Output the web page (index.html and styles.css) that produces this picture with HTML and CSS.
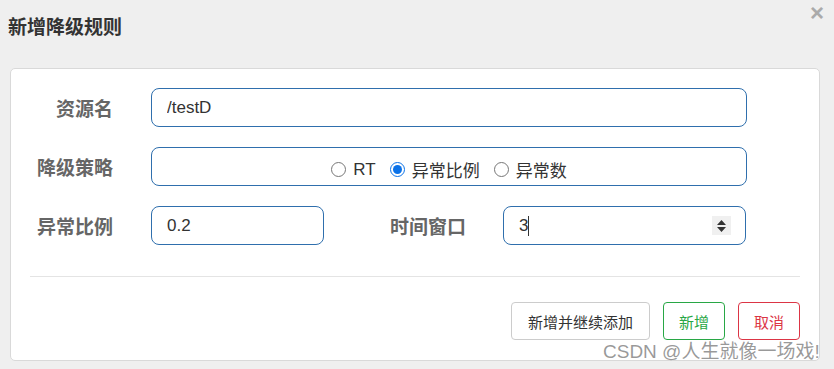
FILE: index.html
```html
<!DOCTYPE html>
<html lang="zh-CN">

<head>
    <meta charset="UTF-8">
    <meta name="viewport" content="width=device-width, initial-scale=1.0">
    <title>新增降级规则</title>
    <link rel="stylesheet" href="styles.css">
</head>

<body>
    <div class="dialog">
        <div class="dialog-head">
            <h3 class="dialog-title">新增降级规则</h3>
            <span class="close">&times;</span>
        </div>
        <div class="panel">
            <form class="form">
                <div class="row">
                    <label class="label">资源名</label>
                    <input class="field field-wide" type="text" value="/testD">
                </div>
                <div class="row">
                    <label class="label">降级策略</label>
                    <div class="field field-wide radios">
                        <label class="radio"><input type="radio" name="grade"> RT</label>
                        <label class="radio"><input type="radio" name="grade" checked> 异常比例</label>
                        <label class="radio"><input type="radio" name="grade"> 异常数</label>
                    </div>
                </div>
                <div class="row">
                    <label class="label">异常比例</label>
                    <input class="field field-short" type="text" value="0.2">
                    <label class="label label-mid">时间窗口</label>
                    <div class="field field-num">
                        <span class="num-val">3</span><span class="caret"></span>
                        <span class="spin">
                            <svg width="11" height="14" viewBox="0 0 11 14"><path d="M5.5 1 L10 6 H1 Z M1 8 H10 L5.5 13 Z" fill="#333"/></svg>
                        </span>
                    </div>
                </div>
            </form>
            <div class="divider"></div>
            <div class="footer">
                <button class="btn">新增并继续添加</button>
                <button class="btn btn-ok">新增</button>
                <button class="btn btn-cancel">取消</button>
            </div>
        </div>
        <div class="mark">CSDN @人生就像一场戏!</div>
    </div>
</body>

</html>
```

FILE: styles.css
```css
* {
    margin: 0;
    padding: 0;
    box-sizing: border-box;
}

body {
    width: 834px;
    height: 369px;
    background-color: #efefef;
    font-family: "Liberation Sans", Arial, "Noto Sans CJK SC", sans-serif;
    color: #333;
    overflow: hidden;
}

.dialog {
    position: relative;
    height: 369px;
}

.dialog-head {
    height: 68px;
    padding: 17px 0 0 8px;
}

.dialog-title {
    font-size: 19px;
    font-weight: bold;
    color: #333;
    line-height: 22px;
}

.close {
    position: absolute;
    right: 10px;
    top: 1px;
    font-size: 24px;
    font-weight: bold;
    color: #aaa;
    line-height: 24px;
}

.panel {
    margin: 0 14px 0 10px;
    height: 293px;
    background-color: #fff;
    border: 1px solid #d9d9d9;
    border-radius: 5px;
    padding: 19px 19px 0 19px;
}

.form {
    display: flex;
    flex-direction: column;
    gap: 20px;
}

.row {
    display: flex;
    align-items: center;
    height: 39px;
}

.label {
    width: 83px;
    text-align: right;
    font-size: 19px;
    font-weight: bold;
    color: #666;
    margin-right: 38px;
}

.label-mid {
    margin-left: 66px;
    margin-right: 37px;
    width: 76px;
}

.field {
    height: 39px;
    border: 1px solid #2f6fad;
    border-radius: 8px;
    font-family: inherit;
    font-size: 17px;
    color: #333;
    padding: 0 15px;
    outline: none;
    background: #fff;
}

.field-wide {
    width: 596px;
}

.field-short {
    width: 173px;
}

.field-num {
    width: 243px;
    display: flex;
    align-items: center;
}

.num-val {
    line-height: 20px;
}

.caret {
    width: 1px;
    height: 20px;
    background: #333;
}

.spin {
    margin-left: auto;
    margin-right: -1px;
    width: 19px;
    height: 19px;
    background: #f0f0f0;
    display: flex;
    align-items: center;
    justify-content: center;
}

.radios {
    display: flex;
    align-items: center;
    justify-content: center;
    gap: 14px;
    padding-top: 6px;
}

.radio {
    display: flex;
    align-items: center;
    font-size: 17px;
    color: #333;
}

.radio input {
    width: 15px;
    height: 15px;
    margin-right: 7px;
    accent-color: #0b72e8;
}

.divider {
    margin-top: 31px;
    height: 1px;
    background: #e4e4e4;
}

.footer {
    display: flex;
    justify-content: flex-end;
    gap: 13px;
    padding-top: 25px;
}

.btn {
    height: 38px;
    padding: 0 16px;
    font-family: inherit;
    font-size: 15px;
    color: #333;
    background: #fff;
    border: 1px solid #ccc;
    border-radius: 4px;
}

.btn-ok {
    width: 62px;
    padding: 0;
    color: #28a745;
    border-color: #28a745;
}

.btn-cancel {
    width: 62px;
    padding: 0;
    color: #dc3545;
    border-color: #dc3545;
}

.mark {
    position: absolute;
    left: 603px;
    top: 336px;
    font-size: 19px;
    color: rgba(120, 120, 120, 0.75);
    white-space: nowrap;
}
```
